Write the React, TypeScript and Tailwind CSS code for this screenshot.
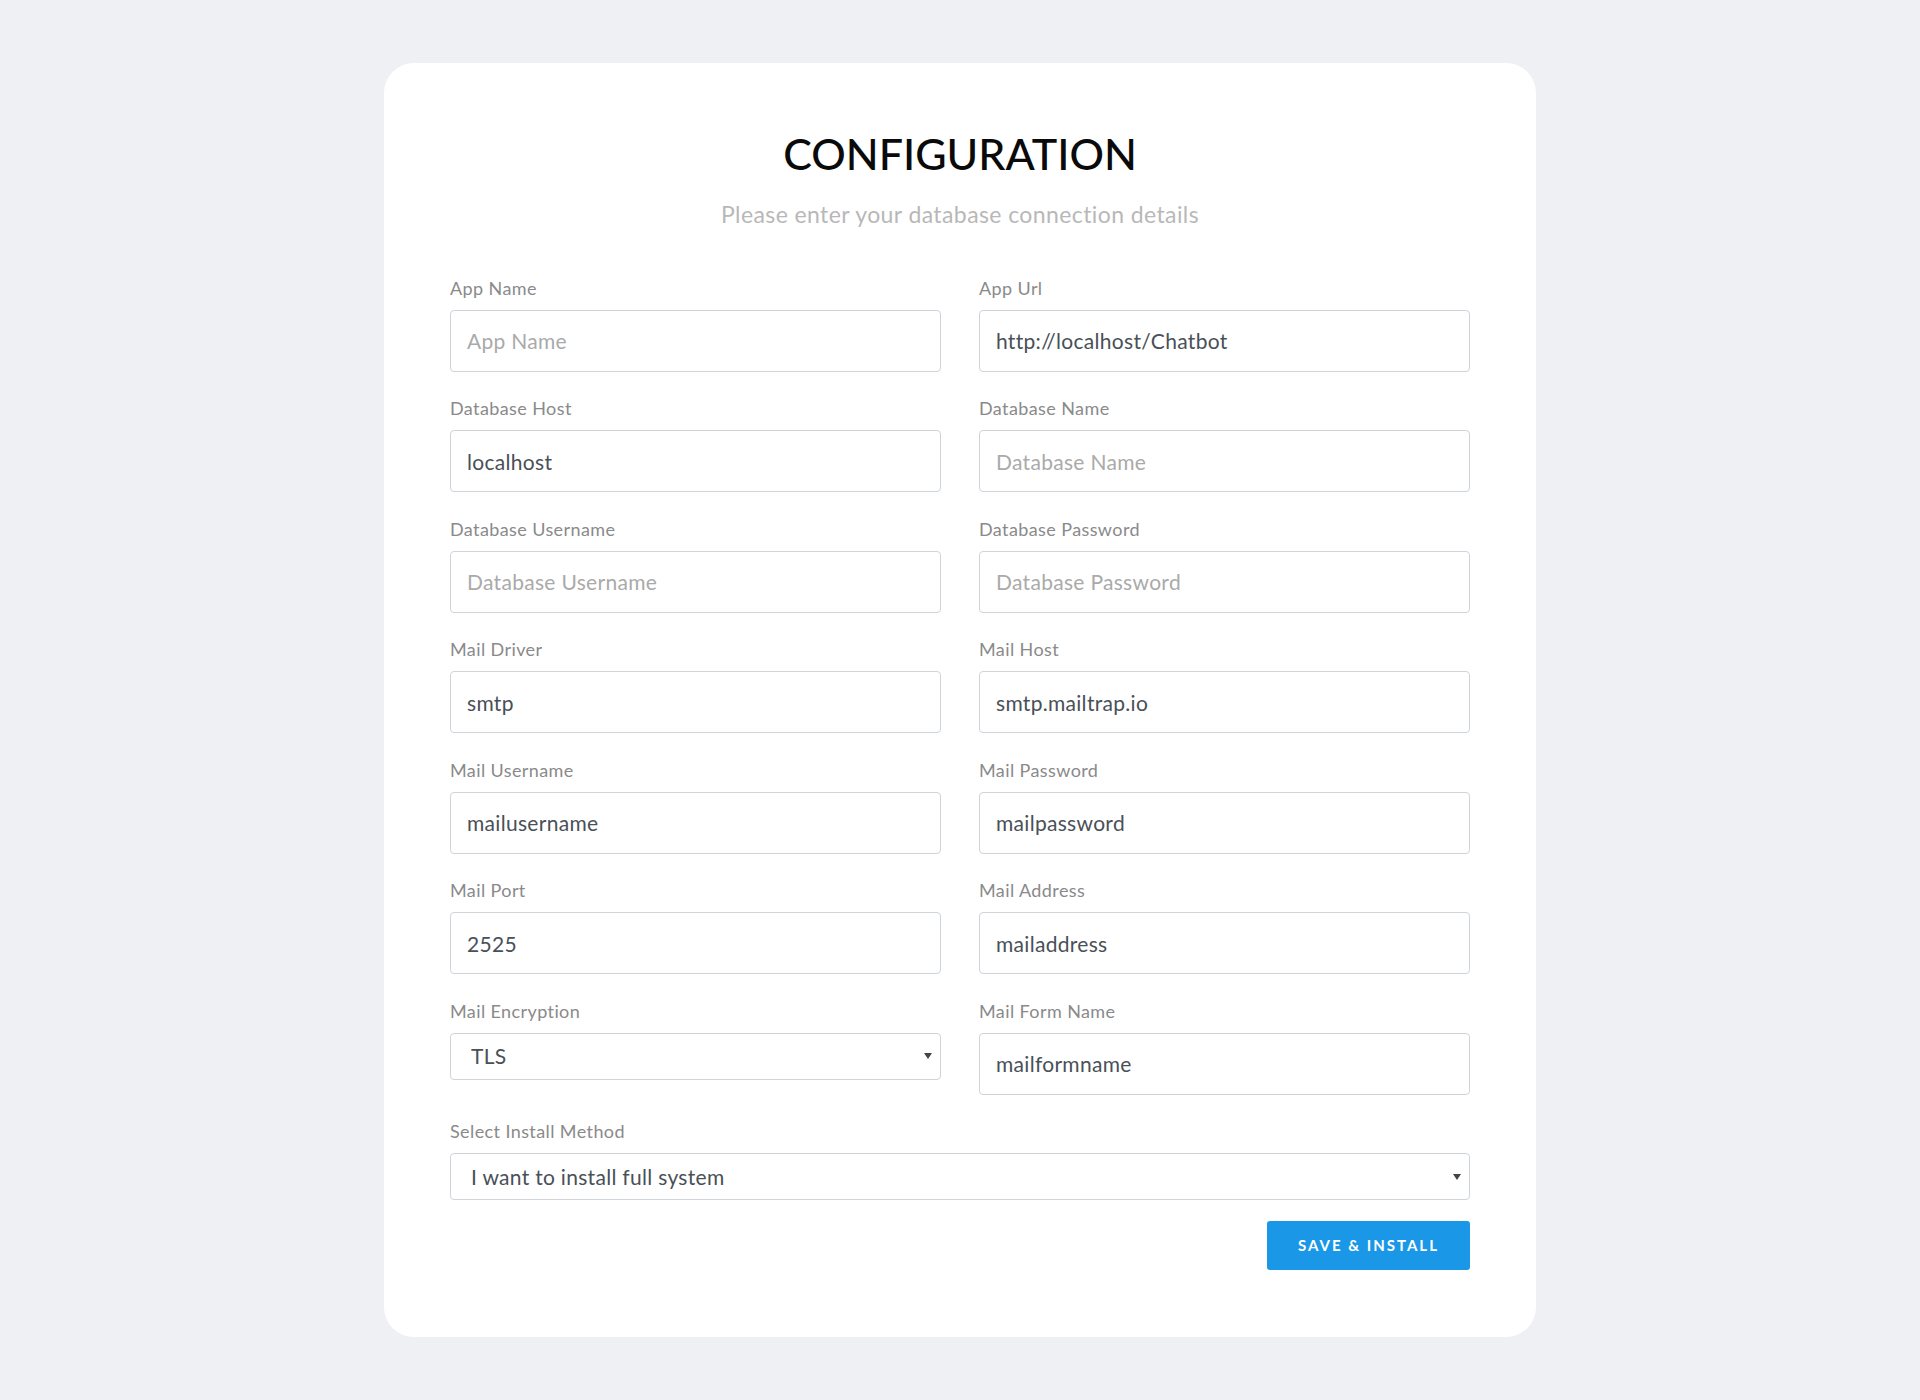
import React from "react";

type Field = { label: string; value?: string; placeholder?: string; select?: boolean };

const rows: [Field, Field][] = [
  [{ label: "App Name", placeholder: "App Name" }, { label: "App Url", value: "http://localhost/Chatbot" }],
  [{ label: "Database Host", value: "localhost" }, { label: "Database Name", placeholder: "Database Name" }],
  [{ label: "Database Username", placeholder: "Database Username" }, { label: "Database Password", placeholder: "Database Password" }],
  [{ label: "Mail Driver", value: "smtp" }, { label: "Mail Host", value: "smtp.mailtrap.io" }],
  [{ label: "Mail Username", value: "mailusername" }, { label: "Mail Password", value: "mailpassword" }],
  [{ label: "Mail Port", value: "2525" }, { label: "Mail Address", value: "mailaddress" }],
  [{ label: "Mail Encryption", value: "TLS", select: true }, { label: "Mail Form Name", value: "mailformname" }],
];

function Arrow() {
  return (
    <svg width="8" height="6" viewBox="0 0 8 6" className="shrink-0">
      <path d="M0 0 L8 0 L4 6 Z" fill="#444" />
    </svg>
  );
}

function SelectBox({ value }: { value: string }) {
  return (
    <div className="h-[47px] w-full border border-[#ced4da] rounded-[4px] bg-white flex items-center justify-between pl-[20px] pr-[8px] text-[21px] tracking-[0.3px] text-[#495057]">
      <span>{value}</span>
      <Arrow />
    </div>
  );
}

function FieldBox({ f }: { f: Field }) {
  return (
    <div className="flex flex-col">
      <label className="text-[18px] leading-[24px] tracking-[0.4px] text-[#8a8a8a] mb-[10px]">{f.label}</label>
      {f.select ? (
        <SelectBox value={f.value || ""} />
      ) : (
        <input
          readOnly
          defaultValue={f.value}
          placeholder={f.placeholder}
          className="h-[62px] w-full border border-[#ced4da] rounded-[4px] bg-white px-4 text-[21px] tracking-[0.3px] text-[#495057] placeholder:text-[#aaa] outline-none"
          style={{ fontFamily: "inherit" }}
        />
      )}
    </div>
  );
}

export default function App() {
  return (
    <div
      className="h-[1400px] bg-[#eef0f4] flex justify-center pt-[63px]"
      style={{ fontFamily: "Lato, 'Open Sans', sans-serif" }}
    >
      <div className="w-[1152px] h-[1274px] bg-white rounded-[30px] px-[66px] pt-[65px] flex flex-col">
        <h1 className="text-center text-[43px] leading-[52px] font-medium text-[#0a0a0a]">CONFIGURATION</h1>
        <p className="text-center text-[23px] leading-[30px] tracking-[0.4px] text-[#b8b8b8] mt-[19px]">
          Please enter your database connection details
        </p>
        <div className="mt-[46.5px] grid grid-cols-2 gap-x-[38px] gap-y-[24.5px] items-start">
          {rows.map((r, i) => (
            <React.Fragment key={i}>
              <FieldBox f={r[0]} />
              <FieldBox f={r[1]} />
            </React.Fragment>
          ))}
          <div className="col-span-2 flex flex-col">
            <label className="text-[18px] leading-[24px] tracking-[0.4px] text-[#8a8a8a] mb-[10px]">Select Install Method</label>
            <SelectBox value="I want to install full system" />
          </div>
        </div>
        <div className="flex justify-end mt-[21px]">
          <button className="h-[49px] w-[203px] bg-[#1a97e6] rounded-[3px] text-white text-[15px] font-bold tracking-[2px]">
            SAVE &amp; INSTALL
          </button>
        </div>
      </div>
    </div>
  );
}
